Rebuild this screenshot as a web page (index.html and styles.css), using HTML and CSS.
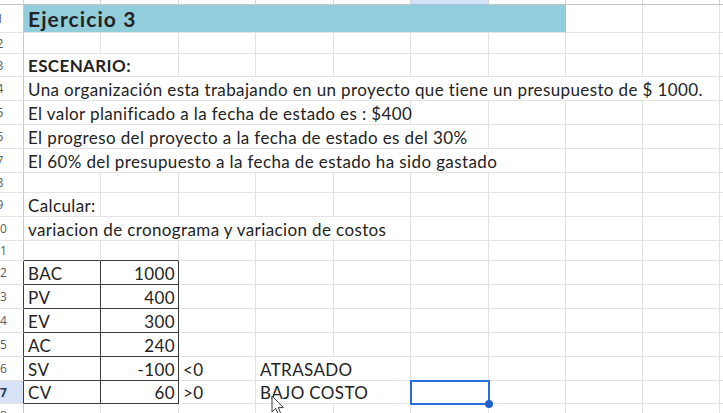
FILE: index.html
```html
<!DOCTYPE html>
<html lang="es">
<head>
<meta charset="utf-8">
<title>Ejercicio 3</title>
<link rel="stylesheet" href="styles.css">
</head>
<body>
<div class="sheet">
  <div class="row colhead">
    <div class="ch corner"></div><div class="ch"></div><div class="ch"></div><div class="ch"></div><div class="ch"></div><div class="ch"></div><div class="ch chsel"></div><div class="ch"></div><div class="ch"></div><div class="ch"></div><div class="ch"></div>
  </div>

  <div class="row r1">
    <div class="rh"><span>1</span></div>
    <div class="c s7 fill title">Ejercicio 3</div>
    <div class="c"></div><div class="c"></div><div class="c"></div>
  </div>

  <div class="row r2">
    <div class="rh"><span>2</span></div>
    <div class="c"></div><div class="c"></div><div class="c"></div><div class="c"></div><div class="c"></div><div class="c"></div><div class="c"></div><div class="c"></div><div class="c"></div><div class="c"></div>
  </div>

  <div class="row r3">
    <div class="rh"><span>3</span></div>
    <div class="c s2 bold">ESCENARIO:</div>
    <div class="c"></div><div class="c"></div><div class="c"></div><div class="c"></div><div class="c"></div><div class="c"></div><div class="c"></div><div class="c"></div>
  </div>

  <div class="row">
    <div class="rh"><span>4</span></div>
    <div class="c s9">Una organización esta trabajando en un proyecto que tiene un presupuesto de $ 1000.</div>
    <div class="c"></div>
  </div>

  <div class="row">
    <div class="rh"><span>5</span></div>
    <div class="c s5">El valor planificado a la fecha de estado es : $400</div>
    <div class="c"></div><div class="c"></div><div class="c"></div><div class="c"></div><div class="c"></div>
  </div>

  <div class="row">
    <div class="rh"><span>6</span></div>
    <div class="c s6">El progreso del proyecto a la fecha de estado es del 30%</div>
    <div class="c"></div><div class="c"></div><div class="c"></div><div class="c"></div>
  </div>

  <div class="row">
    <div class="rh"><span>7</span></div>
    <div class="c s7">El 60% del presupuesto a la fecha de estado ha sido gastado</div>
    <div class="c"></div><div class="c"></div><div class="c"></div>
  </div>

  <div class="row r8">
    <div class="rh"><span>8</span></div>
    <div class="c"></div><div class="c"></div><div class="c"></div><div class="c"></div><div class="c"></div><div class="c"></div><div class="c"></div><div class="c"></div><div class="c"></div><div class="c"></div>
  </div>

  <div class="row">
    <div class="rh"><span>9</span></div>
    <div class="c">Calcular:</div>
    <div class="c"></div><div class="c"></div><div class="c"></div><div class="c"></div><div class="c"></div><div class="c"></div><div class="c"></div><div class="c"></div><div class="c"></div>
  </div>

  <div class="row">
    <div class="rh"><span>10</span></div>
    <div class="c s5">variacion de cronograma y variacion de costos</div>
    <div class="c"></div><div class="c"></div><div class="c"></div><div class="c"></div><div class="c"></div>
  </div>

  <div class="row r11">
    <div class="rh"><span>11</span></div>
    <div class="c tb"></div><div class="c tb"></div><div class="c"></div><div class="c"></div><div class="c"></div><div class="c"></div><div class="c"></div><div class="c"></div><div class="c"></div><div class="c"></div>
  </div>

  <div class="row">
    <div class="rh tl"><span>12</span></div>
    <div class="c t">BAC</div><div class="c t num">1000</div>
    <div class="c"></div><div class="c"></div><div class="c"></div><div class="c"></div><div class="c"></div><div class="c"></div><div class="c"></div><div class="c"></div>
  </div>

  <div class="row">
    <div class="rh tl"><span>13</span></div>
    <div class="c t">PV</div><div class="c t num">400</div>
    <div class="c"></div><div class="c"></div><div class="c"></div><div class="c"></div><div class="c"></div><div class="c"></div><div class="c"></div><div class="c"></div>
  </div>

  <div class="row">
    <div class="rh tl"><span>14</span></div>
    <div class="c t">EV</div><div class="c t num">300</div>
    <div class="c"></div><div class="c"></div><div class="c"></div><div class="c"></div><div class="c"></div><div class="c"></div><div class="c"></div><div class="c"></div>
  </div>

  <div class="row">
    <div class="rh tl"><span>15</span></div>
    <div class="c t">AC</div><div class="c t num">240</div>
    <div class="c"></div><div class="c"></div><div class="c"></div><div class="c"></div><div class="c"></div><div class="c"></div><div class="c"></div><div class="c"></div>
  </div>

  <div class="row">
    <div class="rh tl"><span>16</span></div>
    <div class="c t">SV</div><div class="c t num">-100</div>
    <div class="c">&lt;0</div><div class="c s2">ATRASADO</div>
    <div class="c"></div><div class="c"></div><div class="c"></div><div class="c"></div><div class="c"></div>
  </div>

  <div class="row r17">
    <div class="rh tl rhsel"><span>17</span></div>
    <div class="c t">CV</div><div class="c t num">60</div>
    <div class="c">&gt;0</div><div class="c s2">BAJO COSTO</div>
    <div class="c sel"></div><div class="c"></div><div class="c"></div><div class="c"></div><div class="c"></div>
  </div>

  <div class="row">
    <div class="rh"><span>18</span></div>
    <div class="c"></div><div class="c"></div><div class="c"></div><div class="c"></div><div class="c"></div><div class="c"></div><div class="c"></div><div class="c"></div><div class="c"></div><div class="c"></div>
  </div>
</div>

<svg class="cursor" width="14" height="22" viewBox="0 0 14 22" aria-hidden="true">
  <path d="M1 1 L1 17 L4.8 13.4 L7.6 20 L10 19 L7.3 12.6 L12.4 12.6 Z" fill="#ffffff" stroke="#3a3a3a" stroke-width="1" stroke-linejoin="round"/>
</svg>
</body>
</html>
```

FILE: styles.css
```css
html, body {
  margin: 0;
  padding: 0;
  background: #ffffff;
}

body {
  width: 723px;
  height: 413px;
  overflow: hidden;
  position: relative;
  font-family: Lato, "Open Sans", sans-serif;
}

.sheet {
  display: flex;
  flex-direction: column;
}

.row {
  display: grid;
  grid-template-columns: 24px 77px 78px 77px 78px 77px 78px 77px 77px 77px 30px;
  height: 24px;
}

.colhead { height: 5px; }
.r1 { height: 28px; }
.r2 { height: 21px; }
.r3 { height: 23px; }
.r8 { height: 20px; }
.r11 { height: 20px; }
.r17 { height: 23px; }

.ch {
  box-sizing: border-box;
  border-right: 1px solid #d4d4d4;
  border-bottom: 1px solid #c4c4c4;
  background: #ffffff;
}

.chsel {
  background: #d3e2f9;
  border-bottom-color: #a9bde0;
}

.rh {
  box-sizing: border-box;
  border-right: 1px solid #c9c9c9;
  border-bottom: 1px solid #e3e3e3;
  overflow: hidden;
  display: flex;
  align-items: center;
  font-family: "Open Sans", sans-serif;
  font-size: 12px;
  color: #5a5a5a;
}

.rh span {
  flex: none;
  width: 48px;
  margin-left: -24px;
  text-align: center;
}

.rhsel {
  background: #d6e2f5;
  color: #1f3763;
  font-weight: 700;
}

.c {
  box-sizing: border-box;
  border-right: 1px solid #e3e3e3;
  border-bottom: 1px solid #e3e3e3;
  display: flex;
  align-items: flex-end;
  padding: 0 4px 2px 4px;
  font-size: 17px;
  line-height: 17px;
  letter-spacing: 0.38px;
  color: #232323;
  white-space: nowrap;
  min-width: 0;
}

.s2 { grid-column: span 2; }
.s5 { grid-column: span 5; }
.s6 { grid-column: span 6; }
.s7 { grid-column: span 7; }
.s9 { grid-column: span 9; }

.bold { font-weight: 700; }

.fill {
  background: #92cddc;
  border-right-color: #92cddc;
  border-bottom-color: #e3e3e3;
}

.title {
  font-weight: 700;
  font-size: 21px;
  line-height: 21px;
  letter-spacing: 1.1px;
  padding-bottom: 3px;
}

.tb { border-bottom-color: #3b3b3b; }

.t {
  border-right-color: #3b3b3b;
  border-bottom-color: #3b3b3b;
}

.tl { border-right-color: #3b3b3b; }

.num {
  justify-content: flex-end;
  padding-right: 3px;
}

.sel {
  position: relative;
  outline: 2px solid #2a6fd6;
  outline-offset: -1px;
}

.sel::after {
  content: "";
  position: absolute;
  right: -5px;
  bottom: -5px;
  width: 8px;
  height: 8px;
  border-radius: 50%;
  background: #1f62cf;
}

.cursor {
  position: absolute;
  left: 271px;
  top: 395px;
}
```
